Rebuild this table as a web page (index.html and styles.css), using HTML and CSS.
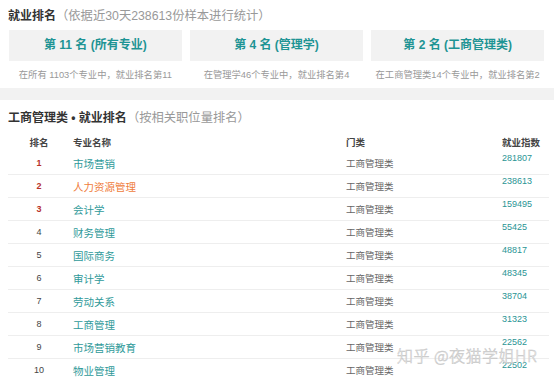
FILE: index.html
```html
<!DOCTYPE html>
<html lang="zh-CN">
<head>
<meta charset="utf-8">
<link rel="stylesheet" href="styles.css">
</head>
<body>
<div class="page">
  <h2 class="title">就业排名<span class="note">（依据近30天238613份样本进行统计）</span></h2>
  <div class="ranks">
    <div class="rank-item">
      <div class="rank-box">第 11 名 (所有专业)</div>
      <div class="rank-sub">在所有 1103个专业中，就业排名第11</div>
    </div>
    <div class="rank-item">
      <div class="rank-box">第 4 名 (管理学)</div>
      <div class="rank-sub">在管理学46个专业中，就业排名第4</div>
    </div>
    <div class="rank-item">
      <div class="rank-box">第 2 名 (工商管理类)</div>
      <div class="rank-sub">在工商管理类14个专业中，就业排名第2</div>
    </div>
  </div>
  <div class="band"></div>
  <h2 class="title section-title">工商管理类 • 就业排名<span class="note">（按相关职位量排名）</span></h2>
  <div class="table">
    <div class="row head">
      <div class="c-rank">排名</div><div class="c-name">专业名称</div><div class="c-cat">门类</div><div class="c-idx">就业指数</div>
    </div>
    <div class="row">
      <div class="c-rank top">1</div><div class="c-name">市场营销</div><div class="c-cat">工商管理类</div><div class="c-idx">281807</div>
    </div>
    <div class="row">
      <div class="c-rank top">2</div><div class="c-name hot">人力资源管理</div><div class="c-cat">工商管理类</div><div class="c-idx">238613</div>
    </div>
    <div class="row">
      <div class="c-rank top">3</div><div class="c-name">会计学</div><div class="c-cat">工商管理类</div><div class="c-idx">159495</div>
    </div>
    <div class="row">
      <div class="c-rank">4</div><div class="c-name">财务管理</div><div class="c-cat">工商管理类</div><div class="c-idx">55425</div>
    </div>
    <div class="row">
      <div class="c-rank">5</div><div class="c-name">国际商务</div><div class="c-cat">工商管理类</div><div class="c-idx">48817</div>
    </div>
    <div class="row">
      <div class="c-rank">6</div><div class="c-name">审计学</div><div class="c-cat">工商管理类</div><div class="c-idx">48345</div>
    </div>
    <div class="row">
      <div class="c-rank">7</div><div class="c-name">劳动关系</div><div class="c-cat">工商管理类</div><div class="c-idx">38704</div>
    </div>
    <div class="row">
      <div class="c-rank">8</div><div class="c-name">工商管理</div><div class="c-cat">工商管理类</div><div class="c-idx">31323</div>
    </div>
    <div class="row">
      <div class="c-rank">9</div><div class="c-name">市场营销教育</div><div class="c-cat">工商管理类</div><div class="c-idx">22562</div>
    </div>
    <div class="row">
      <div class="c-rank">10</div><div class="c-name">物业管理</div><div class="c-cat">工商管理类</div><div class="c-idx">22502</div>
    </div>
  </div>
  <div class="watermark">知乎 @夜猫学姐HR</div>
</div>
</body>
</html>
```
FILE: styles.css
```css
* { box-sizing: border-box; }
html, body { margin: 0; padding: 0; background: #fff; }
body {
  font-family: "Liberation Sans", "Noto Sans CJK SC", sans-serif;
  color: #333;
  overflow: hidden;
}
.page { position: relative; width: 554px; height: 380px; }
.title {
  margin: 0;
  padding: 6px 0 0 8px;
  height: 30px;
  font-size: 12px;
  line-height: 20px;
  font-weight: bold;
  color: #333;
}
.note { font-weight: normal; color: #999; font-size: 12.3px; }
.ranks {
  display: grid;
  grid-template-columns: 1fr 1fr 1fr;
  column-gap: 8.5px;
  padding: 0 10px 0 9px;
}
.rank-box {
  height: 31px;
  background: #f2f2f2;
  color: #1e9494;
  font-weight: bold;
  font-size: 12px;
  line-height: 31px;
  text-align: center;
}
.rank-sub {
  margin-top: 7px;
  font-size: 9.3px;
  line-height: 14px;
  color: #999;
  text-align: center;
  white-space: nowrap;
}
.band { height: 12px; background: #f2f2f2; margin-top: 6px; }
.section-title { padding-top: 8px; height: 32px; }
.table { margin: 0 5px 0 8px; }
.row {
  display: grid;
  grid-template-columns: 62px 276px 156px 1fr;
  height: 23px;
  border-bottom: 1px solid #eeeeee;
  align-items: center;
  font-size: 10.5px;
}
.row.head { height: 20px; border-bottom: none; }
.row.head > div { font-weight: bold; font-size: 9.5px; color: #444; }
.c-rank { text-align: center; font-size: 9px; color: #444; }
.c-rank.top { color: #b8322a; font-weight: bold; }
.c-name { padding-left: 3px; color: #2f9a9a; }
.c-name.hot { color: #ef7d3c; }
.row.head .c-name { color: #444; }
.c-cat { font-size: 9.5px; color: #666; }
.c-idx { font-size: 9px; color: #2a9494; align-self: start; padding-top: 1px; }
.row.head .c-idx { align-self: center; padding-top: 0; }
.watermark {
  position: absolute;
  left: 397px;
  top: 345px;
  font-size: 16px;
  line-height: 20px;
  letter-spacing: 0.5px;
  font-family: "Noto Sans CJK SC", sans-serif;
  font-weight: 200;
  color: rgba(255, 255, 255, 0.9);
  -webkit-text-stroke: 0.5px #c4c4c4;
}
```
